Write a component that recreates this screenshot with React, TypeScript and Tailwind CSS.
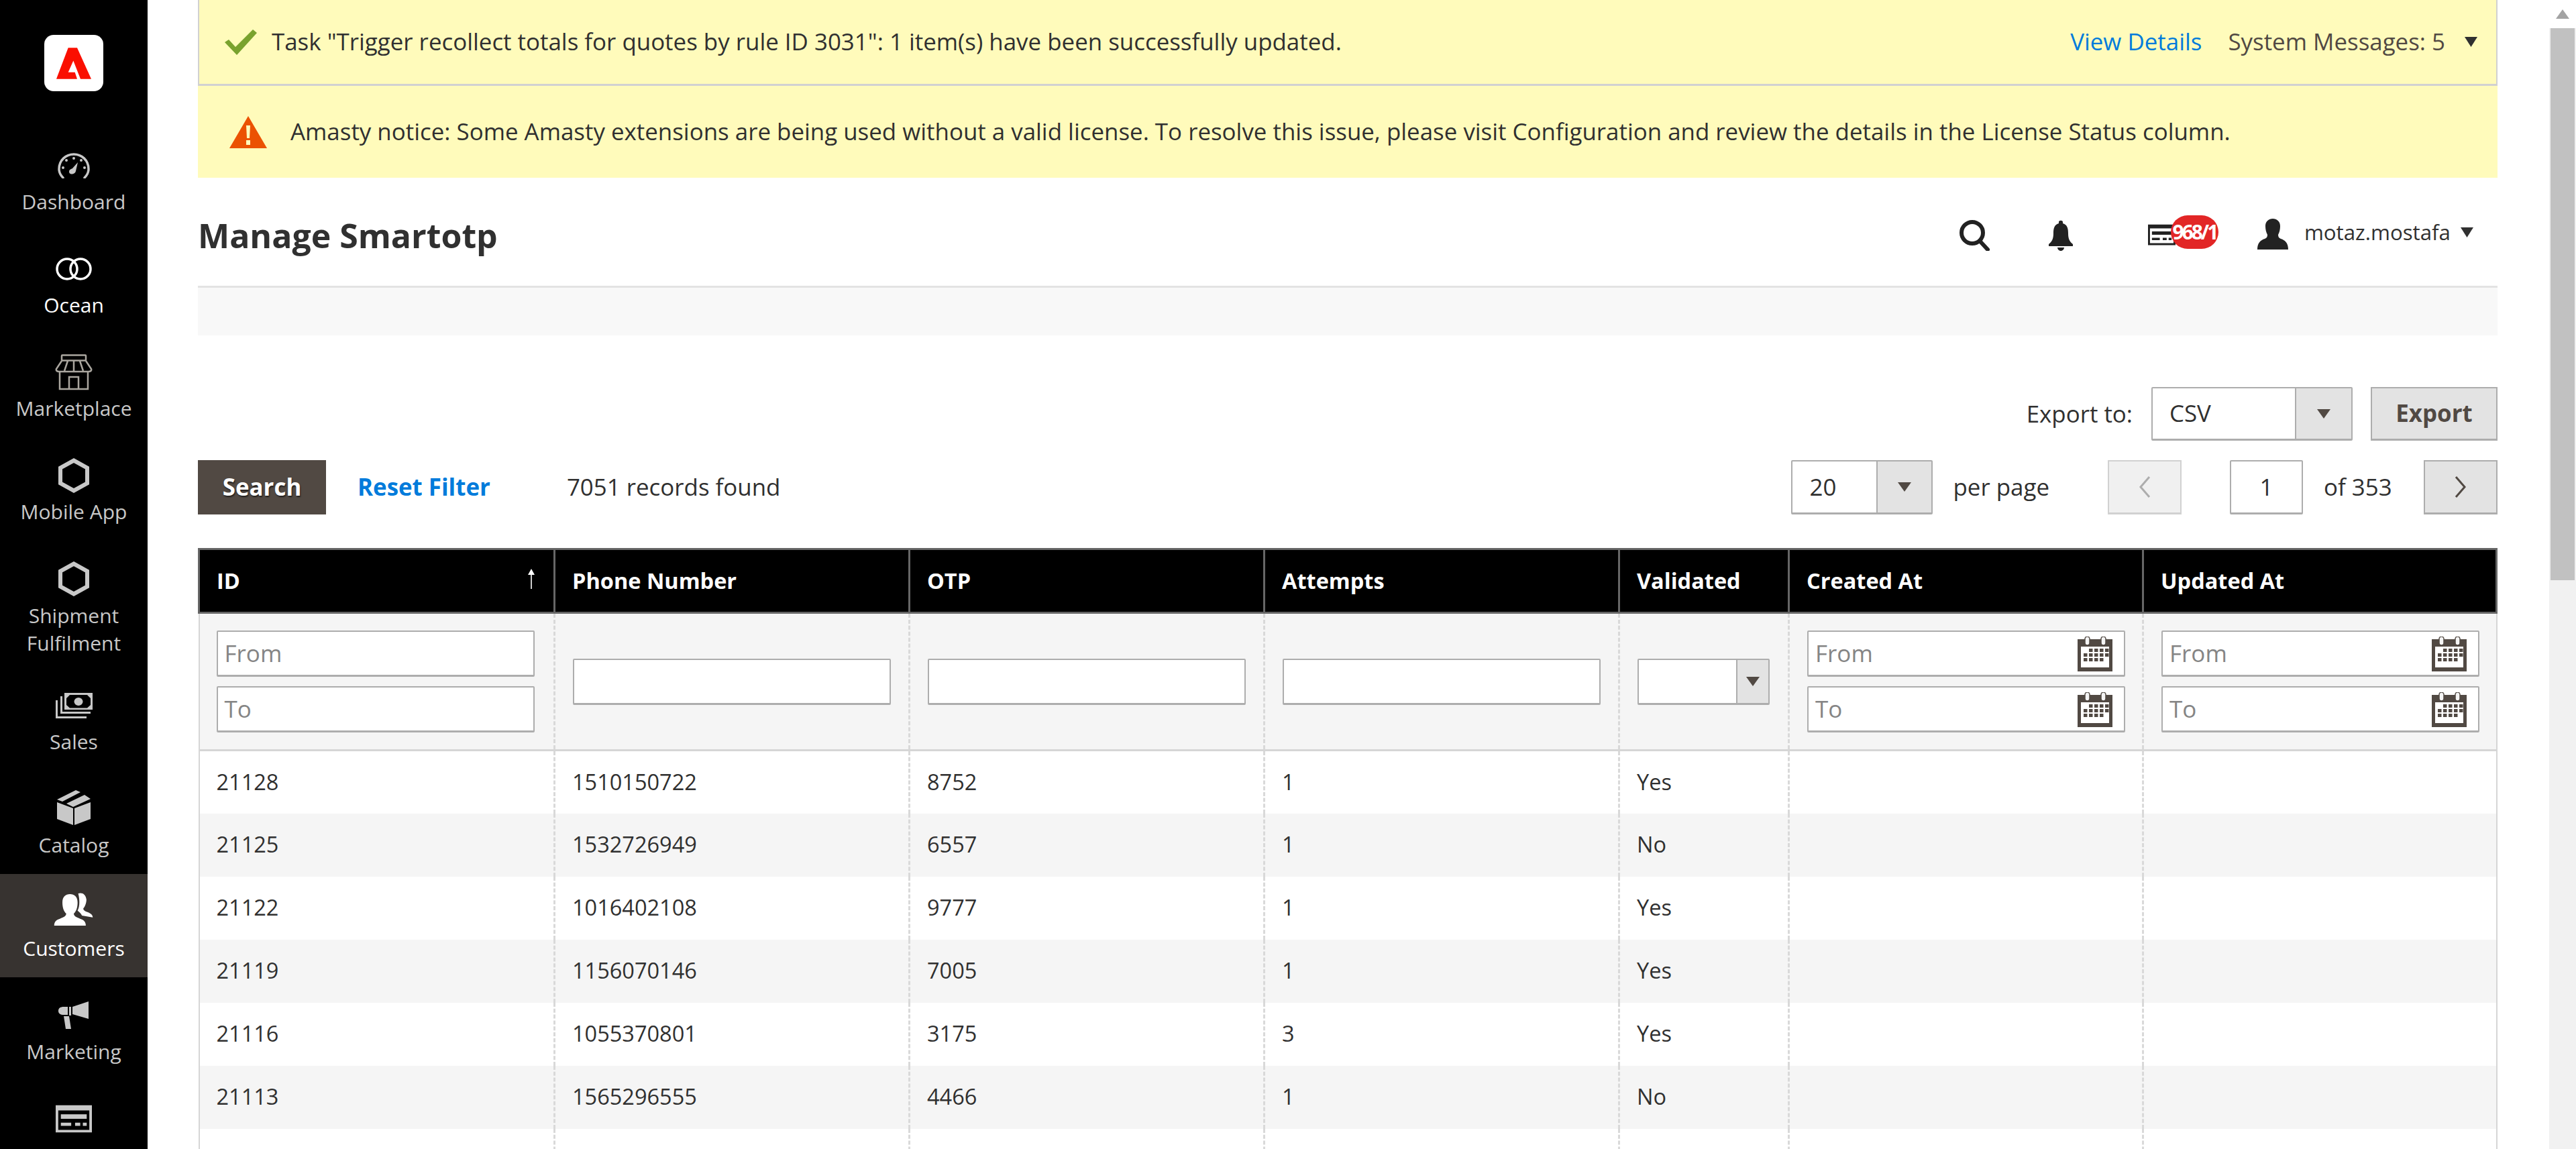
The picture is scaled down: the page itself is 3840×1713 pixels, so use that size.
import React from "react";

const FONT = "font-['Open_Sans',sans-serif]";

function Gauge() {
  return (
    <svg width="48" height="38" viewBox="0 0 48 38" fill="none" className="text-[#c8c8c8]">
      <path d="M8 37C4 33 2 28 2 24C2 11 12 2 24 2C36 2 46 11 46 24C46 28 44 33 40 37" stroke="currentColor" strokeWidth="3.5" strokeLinecap="round" />
      <g fill="currentColor">
        <circle cx="24" cy="8" r="2" /><circle cx="13" cy="11" r="2" /><circle cx="35" cy="11" r="2" /><circle cx="8" cy="22" r="2" /><circle cx="40" cy="22" r="2" />
        <path d="M17 28C17 25 20 24 22 23L30 14L27 27C26 31 22 32 20 31.500C18 31 17 30 17 28Z" />
      </g>
    </svg>
  );
}
function Rings() {
  return (
    <svg width="56" height="34" viewBox="0 0 56 34" fill="none" stroke="#fff" strokeWidth="3.5">
      <circle cx="18" cy="17" r="15" /><circle cx="38" cy="17" r="15" />
    </svg>
  );
}
function Store() {
  return (
    <svg width="56" height="54" viewBox="0 0 56 54" fill="none" stroke="#aaa69f" strokeWidth="2.500">
      <rect x="10" y="1.500" width="36" height="8" rx="1" />
      <path d="M10 10L2 22C1 25 4 26 6 26H50C52 26 55 25 54 22L46 10" />
      <path d="M19 10L14 25M28 10V25M37 10L42 25" />
      <path d="M7 26V52H49V26" />
      <path d="M21 52V34H35V52" />
    </svg>
  );
}
function Hex() {
  return (
    <svg width="46" height="52" viewBox="0 0 46 52" fill="none" stroke="#c8c8c8" strokeWidth="6">
      <path d="M23 3.500L43 14.500V37.500L23 48.500L3 37.500V14.500Z" />
    </svg>
  );
}
function Sales() {
  return (
    <svg width="55" height="38" viewBox="0 0 55 38" fill="#c8c8c8">
      <path fillRule="evenodd" d="M13 0H55V25H13ZM21 3L16 8V18L21 22.500H47L52 18V8L47 3Z" />
      <ellipse cx="34" cy="13" rx="6.500" ry="6" />
      <path d="M7 5H10V28H52V31H7Z" />
      <path d="M0 11H3V35H46V38H0Z" />
    </svg>
  );
}
function Box() {
  return (
    <svg width="52" height="52" viewBox="0 0 52 52" fill="#c8c8c8">
      <path d="M1 18L25 27V52L1 43ZM27 27L51 18V43L27 52Z" />
      <path d="M1 14L29 0L36 3L9 17ZM15 20L42 7L51 13L25 25Z" />
    </svg>
  );
}
function Users() {
  return (
    <svg width="60" height="49" viewBox="0 0 62 52" fill="#fff">
      <path d="M38 1C44 -1 50 2 51 11C51 17 48 23 46 25C46 28 50 30 54 31C58 33 61 35 61 39L44 36C42 32 39 30 37 28C40 23 41 13 38 1Z" />
      <path d="M0 52C0 46 3 43 9 41C15 39 19 37 19 33C15 29 13 23 13 15C13 6 18 2 25 2C32 2 37 6 37 15C37 23 35 29 31 33C31 37 35 39 41 41C47 43 50 46 50 52Z" />
    </svg>
  );
}
function Megaphone() {
  return (
    <svg width="46" height="42" viewBox="0 0 46 42" fill="#c8c8c8">
      <path d="M16 8H19V21H16ZM21 8L45 0V26L21 19Z" />
      <path d="M14 8H8C3 8 0 10 0 14C0 18 3 20 8 20H14Z" />
      <path d="M8 22H16L19 41H11Z" />
    </svg>
  );
}
function Card({ color = "#c8c8c8", w = 54, h = 42 }: { color?: string; w?: number; h?: number }) {
  return (
    <svg width={w} height={h} viewBox="0 0 56 42">
      <path fill={color} fillRule="evenodd" d="M0 0H56V42H0ZM4 8V38H52V8Z" />
      <path fill={color} d="M8 14H48V21H8ZM8 27H24V32H8ZM30 27H38V32H30ZM42 27H48V32H42Z" />
    </svg>
  );
}
function Logo() {
  return (
    <svg width="52" height="47" viewBox="0 0 156 140">
      <path fill="#fa0f00" d="M53 0H93L156 140H108L76 58L53 110H83L93 140H0Z" />
    </svg>
  );
}

const menu: { label: string[]; icon: React.ReactNode; active?: boolean; bright?: boolean; pad?: string; shift?: string }[] = [
  { label: ["Dashboard"], icon: <Gauge /> },
  { label: ["Ocean"], icon: <Rings />, bright: true },
  { label: ["Marketplace"], icon: <Store /> },
  { label: ["Mobile App"], icon: <Hex /> },
  { label: ["Shipment", "Fulfilment"], icon: <Hex />, pad: "pb-[16px]" },
  { label: ["Sales"], icon: <Sales /> },
  { label: ["Catalog"], icon: <Box />, shift: "pb-[3px]" },
  { label: ["Customers"], icon: <Users />, active: true, shift: "pb-[8px]" },
  { label: ["Marketing"], icon: <Megaphone /> },
  { label: [], icon: <Card /> },
];

function Sidebar() {
  return (
    <aside className="w-[220px] shrink-0 bg-black flex flex-col items-center overflow-hidden">
      <div className="mt-[52px] mb-[54px] w-[88px] h-[84px] shrink-0 rounded-[14px] bg-white flex items-center justify-center">
        <Logo />
      </div>
      {menu.map((m, i) => (
        <div
          key={i}
          className={`w-full shrink-0 flex flex-col items-center pt-[22px] ${m.pad ?? "pb-[23px]"} ${m.active ? "bg-[#373330] text-white" : m.bright ? "text-white" : "text-[#c8c8c8]"}`}
        >
          <div className={`h-[69px] flex items-center justify-center ${m.shift ?? ""}`}>{m.icon}</div>
          {m.label.map((l) => (
            <div key={l} className={`text-[30px] ${m.label.length > 1 ? "leading-[41px]" : "leading-[40px]"}`}>{l}</div>
          ))}
        </div>
      ))}
    </aside>
  );
}

function Triangle({ color = "#303030", w = 20, h = 13 }: { color?: string; w?: number; h?: number }) {
  return (
    <svg width={w} height={h} viewBox="0 0 20 13" preserveAspectRatio="none" className="shrink-0">
      <path d="M0 0H20L10 13Z" fill={color} />
    </svg>
  );
}

function Notices() {
  return (
    <>
      <div className="h-[128px] shrink-0 bg-[#fffbbb] border-x-2 border-b-[3px] border-[#d1d1d1] flex items-center pl-[38px] pr-[28px]">
        <svg width="48" height="38" viewBox="0 0 48 38" className="shrink-0 mr-[22px]">
          <path d="M0 19L6 15L16 26L42 0L48 5L18 38Z" fill="#79a22e" />
        </svg>
        <span className="text-[#303030]">Task "Trigger recollect totals for quotes by rule ID 3031": 1 item(s) have been successfully updated.</span>
        <span className="ml-auto text-[#007bdb]">View Details</span>
        <span className="ml-[39px] text-[#514943]">System Messages: 5</span>
        <span className="ml-[29px]"><Triangle w={19} h={15} /></span>
      </div>
      <div className="h-[137px] shrink-0 bg-[#fffbbb] flex items-center pl-[47px]">
        <svg width="56" height="48" viewBox="0 0 56 48" className="shrink-0 mr-[35px]">
          <path d="M28 0L56 48H0Z" fill="#eb5202" />
          <path d="M25 14H31L30 33H26ZM25 36H31V43H25Z" fill="#fffbbb" />
        </svg>
        <span className="text-[#303030]">Amasty notice: Some Amasty extensions are being used without a valid license. To resolve this issue, please visit Configuration and review the details in the License Status column.</span>
      </div>
    </>
  );
}

function PageHeader() {
  return (
    <header className="h-[161px] shrink-0 flex items-center relative">
      <h1 className="text-[50px] font-bold leading-none text-[#303030] mt-[10px]">Manage Smartotp</h1>
      <div className="ml-auto flex items-center mt-[10px]">
        <svg width="46" height="46" viewBox="0 0 46 46" fill="none" stroke="#222" strokeWidth="6" className="shrink-0">
          <ellipse cx="19" cy="19" rx="16" ry="16" />
          <path d="M30 31L42 44" strokeLinecap="round" />
        </svg>
        <svg width="40" height="46" viewBox="0 0 40 46" fill="#222" className="shrink-0 ml-[85px]">
          <path d="M17 3C17 0 23 0 23 3V5C30 7 31 13 31 20C31 28 33 32 38 36V39H2V36C7 32 9 28 9 20C9 13 10 7 17 5Z" />
          <path d="M15 41H25C25 44 22 46 20 46C18 46 15 44 15 41Z" />
        </svg>
        <div className="relative ml-[110px] w-[105px] h-[36px]">
          <Card color="#222" w={41} h={34} />
          <span className="absolute left-[34px] top-[-12px] w-[71px] h-[50px] rounded-[25px] bg-[#e22626] text-white text-[30px] font-bold leading-[50px] text-center tracking-[-3px] whitespace-nowrap">968/1</span>
        </div>
        <svg width="46" height="46" viewBox="0 0 46 46" fill="#222" className="shrink-0 ml-[58px] mb-[4px]">
          <path d="M0 46C0 36 5 32 11 30C14 29 15 27 15 24C13 20 12 16 12 11C12 4 17 0 23 0C29 0 34 4 34 11C34 16 33 20 31 24C31 27 32 29 35 30C41 32 46 36 46 46Z" />
        </svg>
        <span className="ml-[24px] mb-[8px] text-[31.25px] text-[#303030] leading-none">motaz.mostafa</span>
        <span className="ml-[15px] mr-[36px] mb-[8px]"><Triangle w={19} h={15} /></span>
      </div>
    </header>
  );
}

function SelectBox({ value, width, arrowW }: { value: string; width: string; arrowW: string }) {
  return (
    <div className={`${width} h-[81px] shrink-0 flex border-2 border-b-[3px] border-[#adadad] bg-white rounded-[2px]`}>
      <div className="flex-1 pl-[25px] flex items-center text-[#303030]">{value}</div>
      <div className={`${arrowW} border-l-2 border-[#adadad] bg-[#e3e3e3] flex items-center justify-center`}>
        <Triangle color="#514943" w={20} h={14} />
      </div>
    </div>
  );
}

function Toolbar() {
  return (
    <>
      <div className="flex justify-end items-center mt-[77px] h-[80px]">
        <span className="text-[#303030] mr-[28px]">Export to:</span>
        <div className="w-[300px] h-[80px] flex border-2 border-b-[3px] border-[#adadad] bg-white rounded-[2px]">
          <div className="flex-1 pl-[25px] flex items-center text-[#303030]">CSV</div>
          <div className="w-[84px] border-l-2 border-[#adadad] bg-[#e3e3e3] flex items-center justify-center">
            <Triangle color="#514943" w={20} h={14} />
          </div>
        </div>
        <button className="ml-[27px] w-[189px] h-[80px] border-2 border-b-[3px] border-[#adadad] bg-[#e3e3e3] text-[#514943] font-bold">Export</button>
      </div>
      <div className="flex items-center mt-[29px] h-[81px]">
        <button className="w-[191px] h-[81px] bg-[#514943] text-white font-bold [text-shadow:1px_2px_2px_rgba(0,0,0,0.6)]">Search</button>
        <span className="ml-[47px] text-[#007bdb] font-bold">Reset Filter</span>
        <span className="ml-[114px] text-[#303030]">7051 records found</span>
        <div className="ml-auto flex items-center">
          <SelectBox value="20" width="w-[211px]" arrowW="w-[82px]" />
          <span className="ml-[30px] text-[#303030]">per page</span>
          <button className="ml-[87px] w-[110px] h-[81px] border-2 border-b-[3px] border-[#d1d1d1] bg-[#f0f0f0] flex items-center justify-center">
            <svg width="20" height="32" viewBox="0 0 20 32" fill="none" stroke="#adadad" strokeWidth="3"><path d="M17 1L4 16L17 31" /></svg>
          </button>
          <div className="ml-[72px] w-[109px] h-[81px] border-2 border-b-[3px] border-[#adadad] bg-white rounded-[2px] flex items-center justify-center text-[#303030]">1</div>
          <span className="ml-[31px] w-[149px] text-[#303030]">of 353</span>
          <button className="w-[110px] h-[81px] border-2 border-b-[3px] border-[#adadad] bg-[#e3e3e3] flex items-center justify-center">
            <svg width="20" height="32" viewBox="0 0 20 32" fill="none" stroke="#514943" strokeWidth="3"><path d="M3 1L16 16L3 31" /></svg>
          </button>
        </div>
      </div>
    </>
  );
}

function Calendar() {
  const squares: [number, number][] = [];
  [17, 25, 33, 41].forEach((x) => squares.push([x, 18]));
  [9, 17, 25, 33, 41].forEach((x) => squares.push([x, 25]));
  [9, 17, 25, 33].forEach((x) => squares.push([x, 32]));
  return (
    <svg width="52" height="52" viewBox="0 0 52 52" className="absolute right-[17px] top-[7px]">
      <path fill="#514943" fillRule="evenodd" d="M0 4H52V52H0ZM5 15V46H47V15Z" />
      <rect x="11" y="0" width="7" height="13" rx="3.500" fill="#f5f5f5" stroke="#514943" strokeWidth="1.500" />
      <rect x="35" y="0" width="7" height="13" rx="3.500" fill="#f5f5f5" stroke="#514943" strokeWidth="1.500" />
      {squares.map(([x, y]) => (
        <rect key={`${x}-${y}`} x={x} y={y} width="5.500" height="5" fill="#514943" />
      ))}
    </svg>
  );
}

function Field({ placeholder, calendar, width }: { placeholder?: string; calendar?: boolean; width: string }) {
  return (
    <div className={`${width} h-[69px] relative border-2 border-b-[3px] border-[#adadad] bg-white rounded-[2px] flex items-center pl-[10px] text-[#858585]`}>
      {placeholder}
      {calendar && <Calendar />}
    </div>
  );
}

const rows = [
  ["21128", "1510150722", "8752", "1", "Yes"],
  ["21125", "1532726949", "6557", "1", "No"],
  ["21122", "1016402108", "9777", "1", "Yes"],
  ["21119", "1156070146", "7005", "1", "Yes"],
  ["21116", "1055370801", "3175", "3", "Yes"],
  ["21113", "1565296555", "4466", "1", "No"],
  ["", "", "", "", ""],
];

const headers = ["ID", "Phone Number", "OTP", "Attempts", "Validated", "Created At", "Updated At"];
const widths = [530, 529, 529, 529, 253, 528, 527];
const DASH = "border-r-[3px] border-dashed border-[#d9d9d9]";

function Grid() {
  return (
    <table className="mt-[50px] w-[3425px] table-fixed border-collapse text-[32.5px]">
      <colgroup>
        {widths.map((w, i) => (
          <col key={i} style={{ width: w }} />
        ))}
      </colgroup>
      <thead>
        <tr className="h-[95px] bg-black">
          {headers.map((h, i) => (
            <th key={h} className="relative border-[3px] border-[#666] px-[25px] text-left text-white font-bold align-middle">
              {h}
              {i === 0 && (
                <svg width="14" height="30" viewBox="0 0 14 30" className="absolute right-[26px] top-[28px]">
                  <path d="M7 0L12 9H7.800V30H6.200V9H2Z" fill="#fff" />
                </svg>
              )}
            </th>
          ))}
        </tr>
      </thead>
      <tbody className="text-[32.5px]">
        <tr className="h-[205px] bg-[#f5f5f5] border-x-2 border-[#d6d6d6] border-b-[3px]">
          <td className={`px-[25px] ${DASH}`}>
            <div className="flex flex-col gap-[14px] text-[35px]">
              <Field placeholder="From" width="w-[474px]" />
              <Field placeholder="To" width="w-[474px]" />
            </div>
          </td>
          {[0, 1, 2].map((i) => (
            <td key={i} className={`px-[26px] ${DASH}`}>
              <Field width="w-[474px]" />
            </td>
          ))}
          <td className={`px-[26px] ${DASH}`}>
            <div className="w-[197px] h-[69px] flex border-2 border-b-[3px] border-[#adadad] bg-white rounded-[2px]">
              <div className="flex-1" />
              <div className="w-[48px] border-l-2 border-[#adadad] bg-[#e3e3e3] flex items-center justify-center">
                <Triangle color="#514943" w={20} h={14} />
              </div>
            </div>
          </td>
          {[0, 1].map((i) => (
            <td key={i} className={`px-[26px] ${i === 0 ? DASH : ""}`}>
              <div className="flex flex-col gap-[14px] text-[35px]">
                <Field placeholder="From" calendar width="w-[474px]" />
                <Field placeholder="To" calendar width="w-[474px]" />
              </div>
            </td>
          ))}
        </tr>
        {rows.map((r, idx) => (
          <tr key={idx} className={`h-[94px] border-x-2 border-[#d6d6d6] ${idx % 2 === 1 ? "bg-[#f5f5f5]" : "bg-white"}`}>
            {[...r, "", ""].map((c, i) => (
              <td key={i} className={`px-[25px] text-[#303030] ${i < 6 ? DASH : ""}`}>
                {c}
              </td>
            ))}
          </tr>
        ))}
      </tbody>
    </table>
  );
}

function Scrollbar() {
  return (
    <div className="w-[40px] shrink-0 bg-[#f1f1f1] flex flex-col items-center">
      <div className="h-[42px] w-full bg-white flex items-center justify-center">
        <svg width="20" height="14" viewBox="0 0 20 14"><path d="M10 0L20 14H0Z" fill="#a3a3a3" /></svg>
      </div>
      <div className="h-[823px] w-[36px] bg-[#c1c1c1]" />
    </div>
  );
}

export default function App() {
  return (
    <div className={`${FONT} w-[3840px] h-[1713px] overflow-hidden flex bg-white text-[34.9px]`}>
      <Sidebar />
      <main className="w-[3580px] shrink-0 pl-[75px] pr-[77px] flex flex-col overflow-hidden">
        <Notices />
        <PageHeader />
        <div className="h-[74px] shrink-0 bg-[#f8f8f8] border-t-[3px] border-[#e3e3e3]" />
        <Toolbar />
        <Grid />
      </main>
      <Scrollbar />
    </div>
  );
}
